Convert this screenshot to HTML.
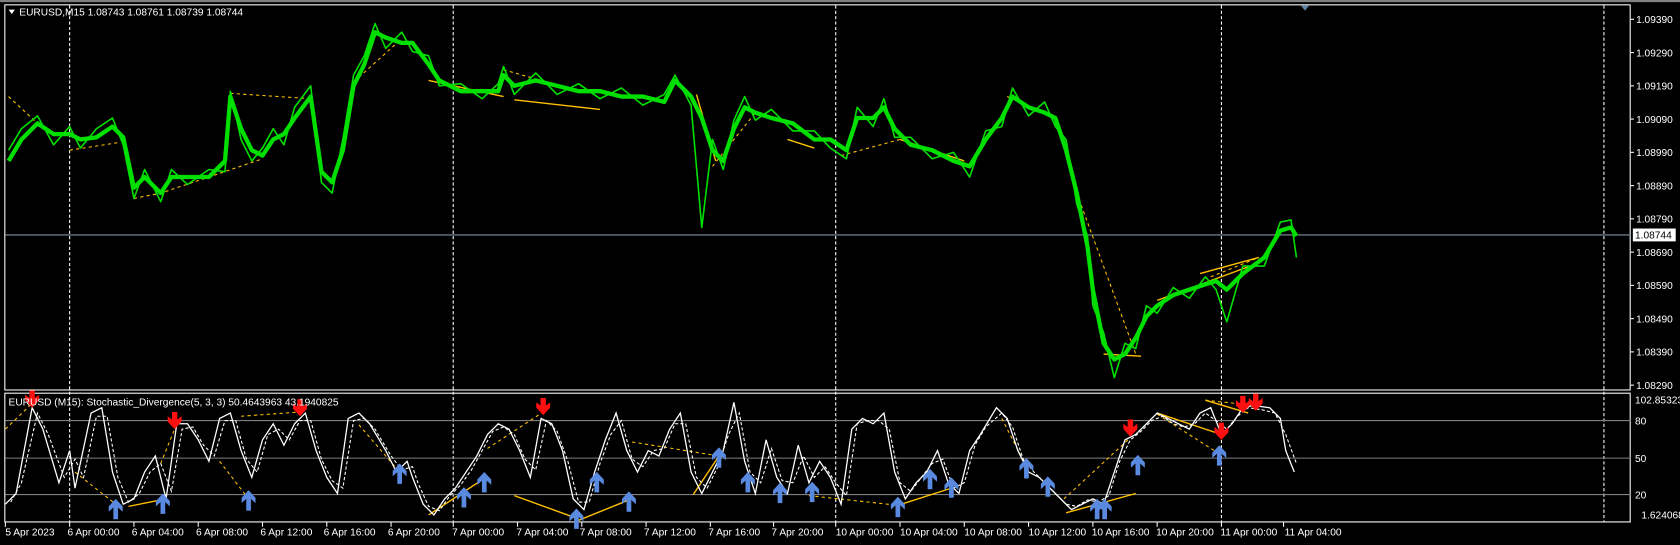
<!DOCTYPE html>
<html><head><meta charset="utf-8"><style>
html,body{margin:0;padding:0;background:#000;overflow:hidden}
svg{display:block}
text{font-family:"Liberation Sans",sans-serif;font-size:9.5px;fill:#fff}
</style></head><body>
<svg width="1680" height="545" viewBox="0 0 1568 508" preserveAspectRatio="none" xmlns="http://www.w3.org/2000/svg">
<rect x="0" y="0" width="1568" height="508" fill="#000"/>
<rect x="0" y="0" width="1568" height="2" fill="#808080"/>
<rect x="4.5" y="4.5" width="1517" height="359" fill="none" stroke="#fff" stroke-width="1"/>
<rect x="4.5" y="366.5" width="1517" height="120" fill="none" stroke="#fff" stroke-width="1"/>
<g stroke="#fff" stroke-width="1" stroke-dasharray="3,2">
<line x1="65" y1="5" x2="65" y2="487"/><line x1="423" y1="5" x2="423" y2="487"/>
<line x1="780" y1="5" x2="780" y2="487"/><line x1="1140" y1="5" x2="1140" y2="487"/>
<line x1="1497" y1="5" x2="1497" y2="487"/>
</g>
<line x1="5" y1="219" x2="1522" y2="219" stroke="#8090a0" stroke-width="1"/>
<g stroke="#808080" stroke-width="1">
<line x1="5" y1="392" x2="1522" y2="392"/><line x1="5" y1="427" x2="1522" y2="427"/><line x1="5" y1="461" x2="1522" y2="461"/>
</g>
<g stroke="#ffc000" stroke-width="1" fill="none" stroke-dasharray="3,3">
<polyline points="8,90 35,115"/><polyline points="65,140 110,133"/><polyline points="215,87 290,92"/>
<polyline points="125,185 150,180 195,165 245,148"/><polyline points="335,72 375,36"/>
<polyline points="470,65 505,75"/><polyline points="665,155 705,105"/><polyline points="785,145 840,130"/>
<polyline points="940,90 975,105"/><polyline points="1005,180 1060,330"/><polyline points="1130,258 1175,240"/>
</g>
<g stroke="#ffc000" stroke-width="1.3" fill="none">
<polyline points="400,75 470,90"/><polyline points="480,93 560,102"/><polyline points="650,88 668,150"/>
<polyline points="735,130 760,138"/><polyline points="840,130 900,150"/><polyline points="1030,330 1065,332"/>
<polyline points="1080,280 1175,245"/><polyline points="1120,255 1175,240"/>
</g>
<g stroke="#00e000" fill="none" stroke-linejoin="round">
<polyline stroke-width="4" points="8,150 20,130 35,115 50,125 65,125 75,130 90,128 105,118 115,128 125,175 135,165 150,180 160,165 175,165 195,165 210,150 215,90 225,120 235,140 245,145 255,130 265,125 275,110 290,90 300,160 310,170 320,140 330,80 340,60 350,30 360,35 375,40 385,40 400,60 410,75 430,85 450,85 465,85 470,70 480,80 500,75 520,80 540,85 560,85 580,90 600,90 620,95 630,75 645,90 655,110 665,140 675,150 685,120 695,100 705,105 720,110 740,115 760,130 775,130 790,140 800,110 815,110 825,100 835,120 850,135 870,140 890,150 905,155 920,130 935,110 945,90 960,100 975,105 985,110 995,140 1005,180 1015,230 1020,270 1030,320 1040,335 1050,330 1060,315 1070,295 1080,285 1095,275 1110,270 1125,265 1135,262 1145,270 1160,255 1180,240 1195,215 1205,212 1210,220"/>
<polyline stroke-width="1.5" points="8,140 20,120 35,108 50,135 65,118 75,138 90,120 105,110 115,135 125,185 135,158 150,188 160,158 175,172 195,158 210,160 215,85 225,130 235,150 245,138 255,120 265,135 275,100 290,80 300,170 310,180 320,130 330,70 340,52 350,22 360,45 375,30 385,48 400,52 410,80 430,78 450,92 465,78 470,62 480,88 500,68 520,88 540,78 560,92 580,82 600,98 620,88 630,70 645,98 655,212 665,130 675,158 685,112 695,90 705,112 720,102 740,122 760,122 775,138 790,148 800,100 815,118 825,92 835,128 850,128 870,148 890,142 905,165 920,122 935,118 945,82 960,108 975,95 985,118 995,130 1005,190 1015,220 1020,285 1030,310 1040,352 1050,320 1060,325 1070,285 1080,292 1095,268 1110,278 1125,258 1135,270 1145,300 1160,248 1180,248 1195,207 1205,205 1210,240"/>
</g>
<path d="M8,9 L14,9 L11,13 Z" fill="#fff"/>
<text x="18" y="14.5">EURUSD,M15  1.08743 1.08761 1.08739 1.08744</text>
<path d="M1214,5 L1222,5 L1218,10 Z" fill="#6080a0"/>
<g stroke="#fff" stroke-width="1">
<line x1="1522" y1="18" x2="1525" y2="18"/><line x1="1522" y1="49" x2="1525" y2="49"/><line x1="1522" y1="80" x2="1525" y2="80"/><line x1="1522" y1="111" x2="1525" y2="111"/><line x1="1522" y1="142" x2="1525" y2="142"/><line x1="1522" y1="173" x2="1525" y2="173"/><line x1="1522" y1="204" x2="1525" y2="204"/><line x1="1522" y1="235" x2="1525" y2="235"/><line x1="1522" y1="266" x2="1525" y2="266"/><line x1="1522" y1="297" x2="1525" y2="297"/><line x1="1522" y1="328" x2="1525" y2="328"/><line x1="1522" y1="359" x2="1525" y2="359"/>
</g>
<g>
<text x="1527" y="21.5">1.09390</text><text x="1527" y="52.5">1.09290</text><text x="1527" y="83.5">1.09190</text><text x="1527" y="114.5">1.09090</text><text x="1527" y="145.5">1.08990</text><text x="1527" y="176.5">1.08890</text><text x="1527" y="207.5">1.08790</text><text x="1527" y="238.5">1.08690</text><text x="1527" y="269.5">1.08590</text><text x="1527" y="300.5">1.08490</text><text x="1527" y="331.5">1.08390</text><text x="1527" y="362.5">1.08290</text>
</g>
<rect x="1524" y="213" width="40" height="12" fill="#fff"/>
<text x="1526" y="222.5" style="fill:#000">1.08744</text>
<text x="1526" y="376">102.85323</text>
<text x="1526" y="395.5">80</text><text x="1526" y="430.5">50</text><text x="1526" y="464.5">20</text>
<text x="1532" y="483.5">1.624068</text>
<g stroke="#ffc000" stroke-width="1" fill="none" stroke-dasharray="3,3">
<polyline points="5,400 30,376"/><polyline points="70,440 108,470"/><polyline points="150,432 163,400"/>
<polyline points="205,430 232,465"/><polyline points="225,388 280,384"/><polyline points="335,396 373,440"/>
<polyline points="455,418 507,384"/><polyline points="590,412 671,425"/><polyline points="755,462 838,471"/>
<polyline points="935,390 958,435"/><polyline points="993,465 1055,408"/><polyline points="1080,386 1138,423"/>
<polyline points="1125,373 1172,378"/>
</g>
<g stroke="#ffc000" stroke-width="1.3" fill="none">
<polyline points="120,472 150,466"/><polyline points="400,480 455,444"/><polyline points="480,462 538,483"/>
<polyline points="540,485 587,466"/><polyline points="647,461 671,425"/><polyline points="838,471 888,455"/>
<polyline points="995,478 1060,460"/><polyline points="1080,385 1140,405"/><polyline points="1125,373 1165,385"/>
</g>
<polyline fill="none" stroke="#fff" stroke-width="1.2" points="5,470 15,460 30,380 40,400 55,450 65,420 70,455 85,385 95,380 105,440 115,470 125,465 135,440 145,425 155,465 165,395 175,395 185,410 195,430 205,390 215,385 225,420 235,445 245,410 255,395 265,415 275,395 285,385 295,420 305,445 315,460 325,390 335,385 345,395 360,420 370,440 380,430 385,445 395,470 405,480 415,465 425,455 435,440 445,425 455,405 465,395 475,400 485,420 495,445 505,390 515,395 525,420 535,465 545,475 555,440 565,410 575,385 585,420 595,440 605,420 615,425 625,400 635,385 645,440 655,460 665,440 675,420 685,375 695,430 705,460 715,410 725,445 735,460 745,415 755,450 765,430 775,445 785,470 795,400 805,390 815,395 825,385 835,440 845,465 855,450 865,440 875,420 885,450 895,460 905,420 915,405 930,380 940,390 950,420 960,440 970,445 980,455 990,465 1000,475 1010,470 1020,465 1030,470 1040,440 1050,410 1060,405 1070,395 1080,385 1090,390 1100,395 1110,400 1120,385 1130,380 1140,405 1150,395 1160,380 1170,378 1185,380 1195,390 1200,420 1208,440"/>
<polyline fill="none" stroke="#fff" stroke-width="1" stroke-dasharray="3,2" points="10,468 20,450 35,385 45,405 60,445 70,428 78,445 90,388 100,388 110,445 120,468 130,460 140,440 150,432 160,458 170,400 180,398 190,415 200,425 210,392 220,392 230,428 240,440 250,405 260,400 270,410 280,392 290,392 300,428 310,448 320,455 330,392 340,390 350,400 365,425 375,438 385,435 390,450 400,472 410,476 420,462 430,452 440,438 450,420 460,402 470,398 480,405 490,428 500,438 510,392 520,402 530,430 540,468 550,468 560,432 570,405 580,392 590,428 600,435 610,420 620,418 630,395 640,395 650,445 660,455 670,435 680,405 690,385 700,440 710,450 720,418 730,448 740,450 750,425 760,445 770,435 780,450 790,462 800,395 810,392 820,392 830,400 840,450 850,458 860,445 870,432 880,428 890,455 900,450 910,415 920,398 935,385 945,398 955,428 965,440 975,450 985,460 995,470 1005,472 1015,466 1025,468 1035,462 1045,430 1055,410 1065,402 1075,392 1085,388 1095,395 1105,398 1115,395 1125,385 1135,392 1145,400 1155,388 1165,380 1178,382 1190,385 1200,405 1210,432"/>
<defs>
<g id="dn"><path d="M-2.5,-11 L2.5,-11 L2.5,-4 L6.5,-7 L6.5,-2 L0,5 L-6.5,-2 L-6.5,-7 L-2.5,-4 Z" fill="#ff1010"/></g>
<g id="up"><path d="M-2.2,11 L2.2,11 L2.2,0 L6.5,4 L6.5,-1 L0,-8 L-6.5,-1 L-6.5,4 L-2.2,0 Z" fill="#5a8ae0"/></g>
</defs>
<g>
<use href="#dn" x="30" y="375"/><use href="#dn" x="163" y="395"/><use href="#dn" x="280" y="383"/><use href="#dn" x="507" y="382"/><use href="#dn" x="1055" y="402"/><use href="#dn" x="1140" y="405"/><use href="#dn" x="1160" y="380"/><use href="#dn" x="1172" y="378"/>
<use href="#up" x="108" y="473"/><use href="#up" x="152" y="468"/><use href="#up" x="232" y="465"/><use href="#up" x="373" y="440"/><use href="#up" x="433" y="462"/><use href="#up" x="452" y="448"/><use href="#up" x="538" y="482"/><use href="#up" x="557" y="448"/><use href="#up" x="587" y="466"/><use href="#up" x="671" y="425"/><use href="#up" x="698" y="448"/><use href="#up" x="728" y="458"/><use href="#up" x="758" y="457"/><use href="#up" x="838" y="471"/><use href="#up" x="868" y="445"/><use href="#up" x="888" y="453"/><use href="#up" x="958" y="435"/><use href="#up" x="978" y="452"/><use href="#up" x="1024" y="473"/><use href="#up" x="1031" y="473"/><use href="#up" x="1062" y="432"/><use href="#up" x="1138" y="423"/>
</g>
<text x="8" y="378">EURUSD (M15):  Stochastic_Divergence(5, 3, 3) 50.4643963 43.1940825</text>
<g stroke="#fff" stroke-width="1">
<line x1="5" y1="487" x2="5" y2="491"/><line x1="65" y1="487" x2="65" y2="491"/><line x1="125" y1="487" x2="125" y2="491"/><line x1="185" y1="487" x2="185" y2="491"/><line x1="245" y1="487" x2="245" y2="491"/><line x1="305" y1="487" x2="305" y2="491"/><line x1="365" y1="487" x2="365" y2="491"/><line x1="423" y1="487" x2="423" y2="491"/><line x1="483" y1="487" x2="483" y2="491"/><line x1="543" y1="487" x2="543" y2="491"/><line x1="603" y1="487" x2="603" y2="491"/><line x1="663" y1="487" x2="663" y2="491"/><line x1="722" y1="487" x2="722" y2="491"/><line x1="780" y1="487" x2="780" y2="491"/><line x1="840" y1="487" x2="840" y2="491"/><line x1="900" y1="487" x2="900" y2="491"/><line x1="960" y1="487" x2="960" y2="491"/><line x1="1020" y1="487" x2="1020" y2="491"/><line x1="1080" y1="487" x2="1080" y2="491"/><line x1="1140" y1="487" x2="1140" y2="491"/><line x1="1198" y1="487" x2="1198" y2="491"/>
</g>
<g>
<text x="5" y="499">5 Apr 2023</text><text x="63" y="499">6 Apr 00:00</text><text x="123" y="499">6 Apr 04:00</text><text x="183" y="499">6 Apr 08:00</text><text x="243" y="499">6 Apr 12:00</text><text x="302" y="499">6 Apr 16:00</text><text x="362" y="499">6 Apr 20:00</text><text x="422" y="499">7 Apr 00:00</text><text x="482" y="499">7 Apr 04:00</text><text x="541" y="499">7 Apr 08:00</text><text x="601" y="499">7 Apr 12:00</text><text x="661" y="499">7 Apr 16:00</text><text x="720" y="499">7 Apr 20:00</text><text x="780" y="499">10 Apr 00:00</text><text x="840" y="499">10 Apr 04:00</text><text x="900" y="499">10 Apr 08:00</text><text x="960" y="499">10 Apr 12:00</text><text x="1019" y="499">10 Apr 16:00</text><text x="1079" y="499">10 Apr 20:00</text><text x="1139" y="499">11 Apr 00:00</text><text x="1199" y="499">11 Apr 04:00</text>
</g>
</svg>
</body></html>
